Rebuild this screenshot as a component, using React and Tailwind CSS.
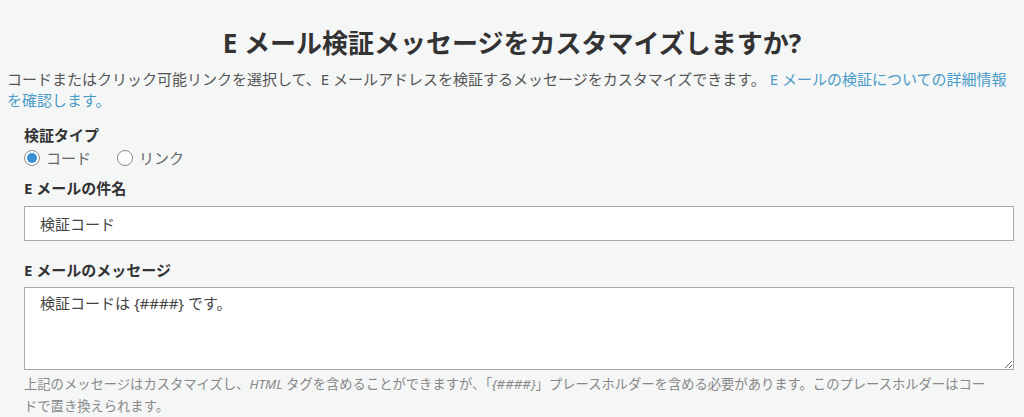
import { useState } from 'react';

// 検証タイプ用ラジオボタン
const Radio = ({ checked, label, onClick }) => (
  <button type="button" onClick={onClick} className="flex items-center gap-[6px]">
    <span className="flex h-[16px] w-[16px] items-center justify-center rounded-full border border-[#8a8a8a] bg-white">
      {checked && <span className="h-[10px] w-[10px] rounded-full bg-[#3b8fd4]" />}
    </span>
    <span className="text-[15px] leading-[22px] text-[#666]">{label}</span>
  </button>
);

const App = () => {
  const [type, setType] = useState('code');
  const [subject, setSubject] = useState('検証コード');
  const [message, setMessage] = useState('検証コードは {####} です。');

  return (
    <div
      className="min-h-[417px] w-full bg-[#f5f6f6] text-[#333]"
      style={{ fontFamily: '"Noto Sans", "Noto Sans CJK JP", sans-serif' }}
    >
      {/* タイトル */}
      <h1 className="pt-[26px] text-center text-[26px] font-bold leading-[34px] text-[#333]">
        E メール検証メッセージをカスタマイズしますか?
      </h1>

      {/* 説明 */}
      <p className="mt-[9px] px-[7px] text-[15px] leading-[21px] text-[#555]">
        コードまたはクリック可能リンクを選択して、E メールアドレスを検証するメッセージをカスタマイズできます。{' '}
        <a href="#" className="text-[#4b9bc8]">
          E メールの検証についての詳細情報
          <br />
          を確認します。
        </a>
      </p>

      <div className="pl-[24px] pr-[10px]">
        {/* 検証タイプ */}
        <div className="mt-[13px] text-[15px] font-bold leading-[22px]">検証タイプ</div>
        <div className="mt-[1px] flex items-center gap-[26px]">
          <Radio checked={type === 'code'} label="コード" onClick={() => setType('code')} />
          <Radio checked={type === 'link'} label="リンク" onClick={() => setType('link')} />
        </div>

        {/* E メールの件名 */}
        <div className="mt-[8px] text-[15px] font-bold leading-[22px]">E メールの件名</div>
        <input
          type="text"
          value={subject}
          onChange={(e) => setSubject(e.target.value)}
          className="mt-[7px] block h-[35px] w-full border border-[#a9a9a9] bg-white px-[15px] text-[15px] text-[#444] outline-none"
        />

        {/* E メールのメッセージ */}
        <div className="mt-[18px] text-[15px] font-bold leading-[22px]">E メールのメッセージ</div>
        <textarea
          value={message}
          onChange={(e) => setMessage(e.target.value)}
          className="mt-[6px] block h-[83px] w-full resize-y border border-[#a9a9a9] bg-white px-[15px] py-[4px] text-[15px] leading-[22px] text-[#444] outline-none"
        />

        {/* 補足 */}
        <p className="mt-[3px] text-[13.3px] leading-[22px] text-[#888]">
          上記のメッセージはカスタマイズし、<i>HTML</i> タグを含めることができますが、「<i>{'{####}'}</i>」プレースホルダーを含める必要があります。このプレースホルダーはコー
          <br />
          ドで置き換えられます。
        </p>
      </div>
    </div>
  );
};

export default App;
